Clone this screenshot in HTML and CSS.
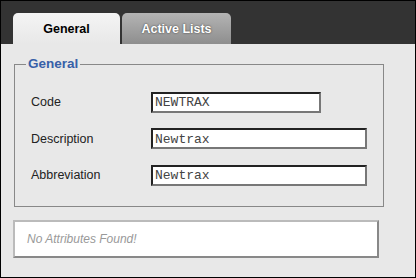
FILE: index.html
```html
<!DOCTYPE html>
<html lang="en">
<head>
    <meta charset="UTF-8">
    <title>General</title>
    <link rel="stylesheet" href="styles.css">
</head>
<body>
    <div id="panel">
        <div class="tab-strip">
            <div class="tab active">General</div>
            <div class="tab">Active Lists</div>
        </div>
        <div class="tab-body">
            <fieldset class="group">
                <legend>General</legend>
                <div class="form-grid">
                    <label>Code</label>
                    <input class="field short" type="text" value="NEWTRAX">
                    <label>Description</label>
                    <input class="field" type="text" value="Newtrax">
                    <label>Abbreviation</label>
                    <input class="field" type="text" value="Newtrax">
                </div>
            </fieldset>
            <div class="attributes">No Attributes Found!</div>
        </div>
    </div>
</body>
</html>
```

FILE: styles.css
```css
/* General Styling */
body {
    margin: 0;
    font-family: 'Liberation Sans', Arial, sans-serif;
    font-size: 12px;
}

/* Panel */
#panel {
    width: 416px;
    height: 278px;
    box-sizing: border-box;
    border: 1px solid #000;
    background: #e8e8e8;
    display: flex;
    flex-direction: column;
}

/* Tabs */
.tab-strip {
    height: 43px;
    box-sizing: border-box;
    background: #333;
    padding: 12px 0 0 12px;
    display: flex;
    gap: 2px;
}

.tab {
    width: 109px;
    height: 31px;
    box-sizing: border-box;
    border-radius: 5px 5px 0 0;
    background: linear-gradient(#b4b4b4, #8e8e8e);
    color: #fff;
    font-size: 12.5px;
    font-weight: bold;
    text-shadow: 0 0 2px #333;
    display: flex;
    align-items: center;
    justify-content: center;
    padding-top: 1px;
}

.tab.active {
    width: 107px;
    background: linear-gradient(#f4f4f4, #e8e8e8);
    color: #000;
    text-shadow: none;
}

/* Body */
.tab-body {
    padding: 12px 0 0 12px;
}

.group {
    width: 369px;
    height: 151px;
    box-sizing: border-box;
    margin: 0 0 0 1px;
    padding: 12px 16px 0 16px;
    border: 1px solid #888;
}

.group legend {
    margin-left: -5px;
    padding: 0 2px;
    font-size: 13.5px;
    font-weight: bold;
    color: #3760a8;
    line-height: 16px;
}

.form-grid {
    display: grid;
    grid-template-columns: 120px 1fr;
    grid-auto-rows: 36.5px;
    align-items: center;
    color: #222;
    font-size: 12.5px;
}

.field {
    width: 216px;
    height: 21px;
    box-sizing: border-box;
    margin: 0;
    padding: 1px 2px 0;
    border: 2px solid #777;
    border-top-color: #222;
    border-left-color: #222;
    background: #fff;
    font-family: 'Liberation Mono', 'Courier New', monospace;
    font-size: 13px;
    color: #444;
    outline: none;
}

.field.short {
    width: 170px;
}

/* Attributes */
.attributes {
    width: 366px;
    height: 38px;
    box-sizing: border-box;
    margin-top: 13px;
    padding-left: 12px;
    border: 2px solid #888;
    border-top-color: #bbb;
    border-left-color: #bbb;
    background: #fff;
    color: #999;
    font-style: italic;
    font-size: 12px;
    display: flex;
    align-items: center;
}
```
